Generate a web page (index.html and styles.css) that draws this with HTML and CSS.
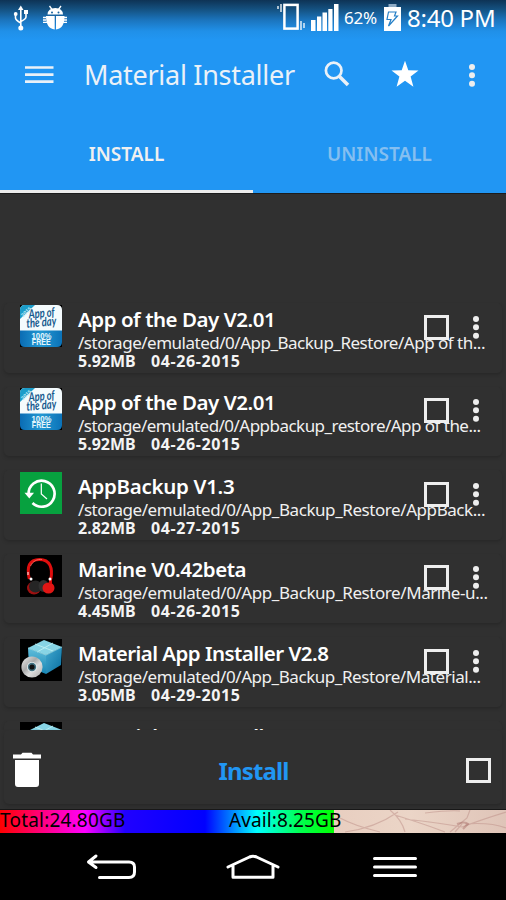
FILE: index.html
```html
<!DOCTYPE html>
<html lang="en">
<head>
<meta charset="utf-8">
<title>Material Installer</title>
<link rel="stylesheet" href="styles.css">
</head>
<body>
<svg class="defs" width="0" height="0" aria-hidden="true">
  <defs>
    <linearGradient id="aqua" x1="0" y1="0" x2="1" y2="0"><stop offset="0" stop-color="#0a6cb4"/><stop offset=".5" stop-color="#2398d2"/><stop offset="1" stop-color="#0b72b8"/></linearGradient>
    <linearGradient id="boxL" x1="0" y1="0" x2="0" y2="1"><stop offset="0" stop-color="#62bedb"/><stop offset="1" stop-color="#1686b5"/></linearGradient>
    <linearGradient id="boxR" x1="0" y1="0" x2="1" y2="1"><stop offset="0" stop-color="#43a9d0"/><stop offset="1" stop-color="#086ea0"/></linearGradient>
    <linearGradient id="disc" x1="0" y1="0" x2="1" y2="1"><stop offset="0" stop-color="#eee"/><stop offset=".4" stop-color="#aaa"/><stop offset=".6" stop-color="#ddd"/><stop offset="1" stop-color="#aaa"/></linearGradient>
    <symbol id="dots" viewBox="0 0 8 24"><circle cx="4" cy="4" r="3"/><circle cx="4" cy="12.3" r="3"/><circle cx="4" cy="20.7" r="3"/></symbol>
    <symbol id="aotd" viewBox="0 0 42 42">
      <rect width="42" height="42"/>
      <path d="M5 0H37Q42 0 42 5V26H0V5Q0 0 5 0Z" fill="#f4fbfd"/>
      <path d="M0 25.5H42V37Q42 42 37 42H5Q0 42 0 37Z" fill="url(#aqua)"/>
      <path d="M5 0H15L0 14V5Q0 0 5 0Z" fill="#1c9cc9"/>
      <text x="2" y="12" font-size="5.5" font-weight="bold" fill="#bfe8f4" font-family="Liberation Sans" transform="rotate(-43 3 11)">2015</text>
      <g fill="#15598d" font-family="Lato" font-style="italic" font-weight="bold" font-size="12.5" transform="rotate(-5 21 14)">
        <text x="9" y="12.5" textLength="26" lengthAdjust="spacingAndGlyphs">App of</text>
        <text x="6" y="21.500" textLength="30" lengthAdjust="spacingAndGlyphs">the day</text>
      </g>
      <g fill="#e4f6fc" font-family="Liberation Sans" font-weight="bold" font-size="8.500">
        <text x="11.500" y="34" textLength="20" lengthAdjust="spacingAndGlyphs">100%</text><text x="11.800" y="40.300" textLength="19" lengthAdjust="spacingAndGlyphs">FREE</text>
      </g>
    </symbol>
    <symbol id="backup" viewBox="0 0 42 42">
      <rect width="42" height="42" fill="#07a13f"/>
      <path d="M8.6 22A13 13 0 1 1 12.5 31" fill="none" stroke="#fff" stroke-width="2.7"/>
      <path d="M4.5 20.8H14L9.3 26.6Z" fill="#fff"/>
      <path d="M21.3 11.5V22L27 27" fill="none" stroke="#fff" stroke-width="1.2"/>
    </symbol>
    <symbol id="phones" viewBox="0 0 42 42">
      <rect width="42" height="42"/>
      <path d="M9.300 24C6.500 12 9 4.500 19.500 4.500S33 13 30.800 24" fill="none" stroke="#e00e0e" stroke-width="3"/>
      <path d="M10.500 11C13 6 17 4 22 4.500" fill="none" stroke="#ff766b" stroke-width=".8"/>
      <ellipse cx="14" cy="33" rx="7" ry="6.500" fill="#9d1111"/>
      <ellipse cx="15.500" cy="31.500" rx="6.500" ry="6" fill="#252525"/>
      <ellipse cx="23.500" cy="31" rx="5" ry="6" fill="#303030"/>
      <ellipse cx="28.500" cy="33" rx="6" ry="5.500" fill="#e01614"/>
      <path d="M30.500 23V29" stroke="#d80c0c" stroke-width="3"/>
      <circle cx="11" cy="24" r="1.500" fill="#fff"/><circle cx="30" cy="24" r="1.500" fill="#fff"/>
      <path d="M8 17V20" stroke="#fff" stroke-width="1"/>
    </symbol>
    <symbol id="box" viewBox="0 0 42 42">
      <rect width="42" height="42"/>
      <path d="M8 9L24 1L42 8L26 16Z" fill="#87d4e5"/>
      <path d="M8 9L26 16V35L9 28Z" fill="url(#boxL)"/>
      <path d="M26 16L42 8L41 26L26 35Z" fill="url(#boxR)"/>
      <path d="M15 5L33 12M17 13L33 4" stroke="#bff0f4" stroke-width=".9"/>
      <path d="M8 9L26 16L42 8" fill="none" stroke="#9ce0ec" stroke-width=".8"/>
      <circle cx="12" cy="28" r="10.600" fill="url(#disc)"/>
      <circle cx="12" cy="28" r="5" fill="#e8f0f2"/><circle cx="12" cy="28" r="4.200" fill="#427080"/><circle cx="12" cy="28" r="2.600" fill="#111"/>
    </symbol>
  </defs>
</svg>
<div class="screen">
  <header class="top">
    <div class="status">
      <svg class="status-left" width="60" height="36" viewBox="8 0 60 36">
        <g fill="none" stroke="#fff" stroke-width="1.600"><path d="M20.800 8V27M15.500 14V18Q15.500 20 20.800 23M26 13V17Q26 19 20.800 21.500"/></g>
        <g fill="#fff"><path d="M18 10L20.800 5.500L23.500 10Z"/><circle cx="15.700" cy="14" r="1.900"/><rect x="24" y="10" width="4" height="4"/><circle cx="20.800" cy="28" r="2.500"/></g>
        <g fill="#fff"><path d="M47.500 14.500Q48 8 55.300 8T63 14.500Z"/><path d="M46 16H54.700V29.500Q46 28.500 46 16ZM56 16H64.500Q64.500 28.500 56 29.500Z"/></g>
        <path d="M49.500 6L52 9.500M61 6L58.500 9.500M43 17.500H46M43 20H46M43 22.300H47M64 17.500H67M64 20H67M63 22.300H67" stroke="#fff" stroke-width="1.300"/>
        <circle cx="52" cy="12.500" r="1" fill="#17629f"/><circle cx="58.500" cy="12.500" r="1" fill="#17629f"/>
      </svg>
      <svg class="signal" width="64" height="36" viewBox="276 0 64 36">
        <path d="M278 6V9M281 4V12M301 21V30M304 23V28" stroke="#fff" stroke-width="1.300"/>
        <rect x="284.400" y="4.900" width="13.200" height="23.700" fill="none" stroke="#fff" stroke-width="2.500"/>
        <path d="M311 20H315.500V31H311ZM317 16.500H321.300V31H317ZM322.500 12.500H327V31H322.500ZM328.300 9H332.500V31H328.300ZM334 4H338.500V31H334Z" fill="#fff"/>
      </svg>
      <span class="percent">62%</span>
      <svg class="battery" width="18" height="36" viewBox="383 0 18 36">
        <path d="M388.500 4H396.500V7H388.500Z" fill="#8eabc4"/><path d="M384 7H401V31H384Z" fill="#fff"/>
        <path d="M388.500 12H396L394.500 16H397.500L388.500 26L391 19.500H387Z" fill="none" stroke="#2680c7" stroke-width="1.200"/>
      </svg>
      <span class="clock">8:40 PM</span>
    </div>
    <div class="toolbar">
      <svg class="menu" width="30" height="18" viewBox="0 0 30 18"><path d="M0 1.500H28.500M0 8.700H28.500M0 15.600H28.500" stroke="#eaf1f8" stroke-width="2.700"/></svg>
      <h1 class="app-title">Material Installer</h1>
      <svg class="search" width="28" height="28" viewBox="0 0 28 28" fill="none" stroke="#eaf1f8"><circle cx="10.700" cy="9.500" r="7.800" stroke-width="2.700"/><path d="M16 15L25 24" stroke-width="3.500"/></svg>
      <svg class="star" width="28" height="28" viewBox="0 0 28 28"><path d="M14 -.3L17.300 9.300L27.500 9.400L19.600 15.500L22.400 25.700L14 19.800L5.600 25.700L8.400 15.500L.5 9.400L10.700 9.300Z" fill="#fff"/></svg>
      <svg class="more" width="8" height="24"><use href="#dots"/></svg>
    </div>
    <nav class="tabs">
      <div class="tab active"><span class="tab-a">INSTALL</span></div>
      <div class="tab"><span class="tab-b">UNINSTALL</span></div>
    </nav>
  </header>
  <main class="list">
    <article class="card">
      <svg class="icon"><use href="#aotd"/></svg>
      <div class="info"><h2 class="name n1">App of the Day V2.01</h2><p class="path p1">/storage/emulated/0/App_Backup_Restore/App of th...</p><p class="meta"><span class="size">5.92MB</span><span class="date">04-26-2015</span></p></div>
      <div class="controls"><i class="check"></i><svg class="more" width="8" height="24"><use href="#dots"/></svg></div>
    </article>
    <article class="card">
      <svg class="icon"><use href="#aotd"/></svg>
      <div class="info"><h2 class="name n1">App of the Day V2.01</h2><p class="path p2">/storage/emulated/0/Appbackup_restore/App of the...</p><p class="meta"><span class="size">5.92MB</span><span class="date">04-26-2015</span></p></div>
      <div class="controls"><i class="check"></i><svg class="more" width="8" height="24"><use href="#dots"/></svg></div>
    </article>
    <article class="card">
      <svg class="icon"><use href="#backup"/></svg>
      <div class="info"><h2 class="name n3">AppBackup V1.3</h2><p class="path p3">/storage/emulated/0/App_Backup_Restore/AppBack...</p><p class="meta"><span class="size">2.82MB</span><span class="date">04-27-2015</span></p></div>
      <div class="controls"><i class="check"></i><svg class="more" width="8" height="24"><use href="#dots"/></svg></div>
    </article>
    <article class="card">
      <svg class="icon"><use href="#phones"/></svg>
      <div class="info"><h2 class="name n4">Marine V0.42beta</h2><p class="path p4">/storage/emulated/0/App_Backup_Restore/Marine-u...</p><p class="meta"><span class="size">4.45MB</span><span class="date">04-26-2015</span></p></div>
      <div class="controls"><i class="check"></i><svg class="more" width="8" height="24"><use href="#dots"/></svg></div>
    </article>
    <article class="card">
      <svg class="icon"><use href="#box"/></svg>
      <div class="info"><h2 class="name n5">Material App Installer V2.8</h2><p class="path p5">/storage/emulated/0/App_Backup_Restore/Material...</p><p class="meta"><span class="size">3.05MB</span><span class="date">04-29-2015</span></p></div>
      <div class="controls"><i class="check"></i><svg class="more" width="8" height="24"><use href="#dots"/></svg></div>
    </article>
    <article class="card">
      <svg class="icon"><use href="#box"/></svg>
      <div class="info"><h2 class="name n5">Material App Installer V2.8</h2></div>
    </article>
  </main>
  <section class="actions">
    <svg class="trash" width="28" height="36" viewBox="0 0 28 36" fill="#fff"><path d="M0 2.500H8L9.500 .8H18.500L20 2.500H28V6.500H0ZM2 8H26V32Q26 35 23 35H5Q2 35 2 32Z"/></svg>
    <span class="install">Install</span>
    <i class="check"></i>
  </section>
  <section class="storage">
    <svg class="marble" width="172" height="23" viewBox="334 0 172 23" fill="none">
      <g stroke="#b98780" stroke-width="1.200" opacity=".45"><path d="M340 8Q355 16 380 22M345 22Q375 18 398 2M390 0Q402 10 405 22M395 5Q430 16 445 22M405 9Q440 13 462 17Q480 10 506 2M450 22L467 8L470 0M462 14L455 22M465 14Q490 12 506 18M425 3Q450 0 460 1"/></g>
      <path d="M457 14Q465 11 468 14L463 19" stroke="#96514c" stroke-width="2" opacity=".35"/>
    </svg>
    <span class="total">Total:24.80GB</span><span class="avail">Avail:8.25GB</span>
  </section>
  <footer class="nav">
    <svg width="506" height="67" viewBox="0 833 506 67" fill="none" stroke="#fff" stroke-width="3" stroke-linecap="round" stroke-linejoin="round">
      <path d="M96 856L88.500 862L96 867.500M89.500 862H129Q134.500 862 134.500 867V872Q134.500 877.500 129 877.500H99.500"/>
      <path d="M228 867L249.500 857Q253 855.500 256.500 857L278 867M233 866V877.200H273V866"/>
      <path d="M374.500 858.500H415.500M374.500 867H415.500M374.500 875.500H415.500"/>
    </svg>
  </footer>
</div>
</body>
</html>
```
FILE: styles.css
```css
* { box-sizing: border-box; margin: 0; padding: 0; }
body { width: 506px; height: 900px; overflow: hidden; background: #303030; font-family: "Noto Sans", "Open Sans", sans-serif; color: #fff; }
svg { display: block; flex: none; }
.defs { position: absolute; }
.screen { display: flex; flex-direction: column; width: 506px; height: 900px; background: #303030; }
.top { height: 193px; flex: none; background: linear-gradient(#0e3355 0, #14507f 9px, #1b74bd 20px, #2090e8 31px, #2196f3 40px); }
.status { display: flex; height: 36px; padding-left: 8px; white-space: nowrap; }
.signal { margin-left: 208px; }
.percent { width: 39px; margin-left: 4px; font-size: 17px; line-height: 36px; letter-spacing: -.2px; }
.clock { margin-left: 6px; font-size: 24px; line-height: 36px; letter-spacing: -.25px; }
.toolbar { display: flex; align-items: center; height: 78px; padding-left: 25px; color: #eaf1f8; }
.app-title { width: 238px; margin-left: 29px; font-size: 27px; font-weight: 400; line-height: 36px; white-space: nowrap; letter-spacing: -.28px; }
.search { margin-left: 1px; }
.star { margin-left: 40px; }
.toolbar .more { margin-left: 49px; }
.more { fill: #eee; }
.tabs { display: flex; height: 79px; }
.tab { flex: 1; height: 79px; text-align: center; font-size: 19px; font-weight: 600; line-height: 80px; color: #85bff0; }
.active { color: #f0f0f0; border-bottom: 3px solid #ececec; }
.list { height: 537px; flex: none; overflow: hidden; padding-top: 110px; box-shadow: inset 0 1px #1c1c1c; }
.card { display: flex; height: 69.5px; margin: 0 4px 14px; padding: 1.5px 0 0 16px; border-radius: 5px; box-shadow: 0 2px 3px #292929; background: #303030; }
.icon { width: 42px; height: 42px; }
.info { width: 414px; margin-left: 16px; white-space: nowrap; }
.name { font-size: 20.5px; line-height: 28px; font-weight: 600; }
.n1 { letter-spacing: -.46px; }
.n3 { letter-spacing: -.3px; }
.n4 { letter-spacing: -.43px; }
.n5 { letter-spacing: -.54px; }
.path { padding-top: 1px; font-size: 17px; line-height: 18px; font-weight: 400; color: #f0f0f0; }
.p1 { letter-spacing: -.49px; }
.p2 { letter-spacing: -.53px; }
.p3 { letter-spacing: -.43px; }
.p4 { letter-spacing: -.43px; }
.p5 { letter-spacing: -.44px; }
.meta { display: flex; gap: 13px; font-size: 16px; line-height: 18px; font-weight: 700; color: #f4f4f4; }
.size { width: 60px; }
.date { letter-spacing: .6px; }
.controls { display: flex; gap: 23px; width: 60px; margin: 10px 0 0 -68px; }
.check { display: block; width: 25px; height: 25px; border: 3px solid #eee; flex: none; }
.actions { display: flex; align-items: center; height: 74px; flex: none; margin: 0 4px 6px; padding: 6px 11px 0 9px; justify-content: space-between; border-radius: 5px; box-shadow: 0 2px 3px #292929; }
.install { color: #2196f3; font-size: 24px; font-weight: 700; line-height: 36px; letter-spacing: -.9px; padding-top: 1px; }
.storage { display: flex; position: relative; height: 23px; flex: none; overflow: hidden; background: linear-gradient(90deg, #f00 0, #f0f 85px, #2000ff 125px, #00f 205px, #0ff 257px, #00ff50 300px, #0f0 334px, #e8cec0 334px, #ebd5c7 410px, #dfc4b8 506px); box-shadow: 0 -1px #181818; color: #000; font-size: 19px; line-height: 20px; white-space: nowrap; }
.marble { position: absolute; left: 334px; top: 0; }
.total { width: 229px; position: relative; letter-spacing: .2px; }
.avail { position: relative; letter-spacing: .1px; }
.nav { height: 67px; flex: none; background: #000; }
```
